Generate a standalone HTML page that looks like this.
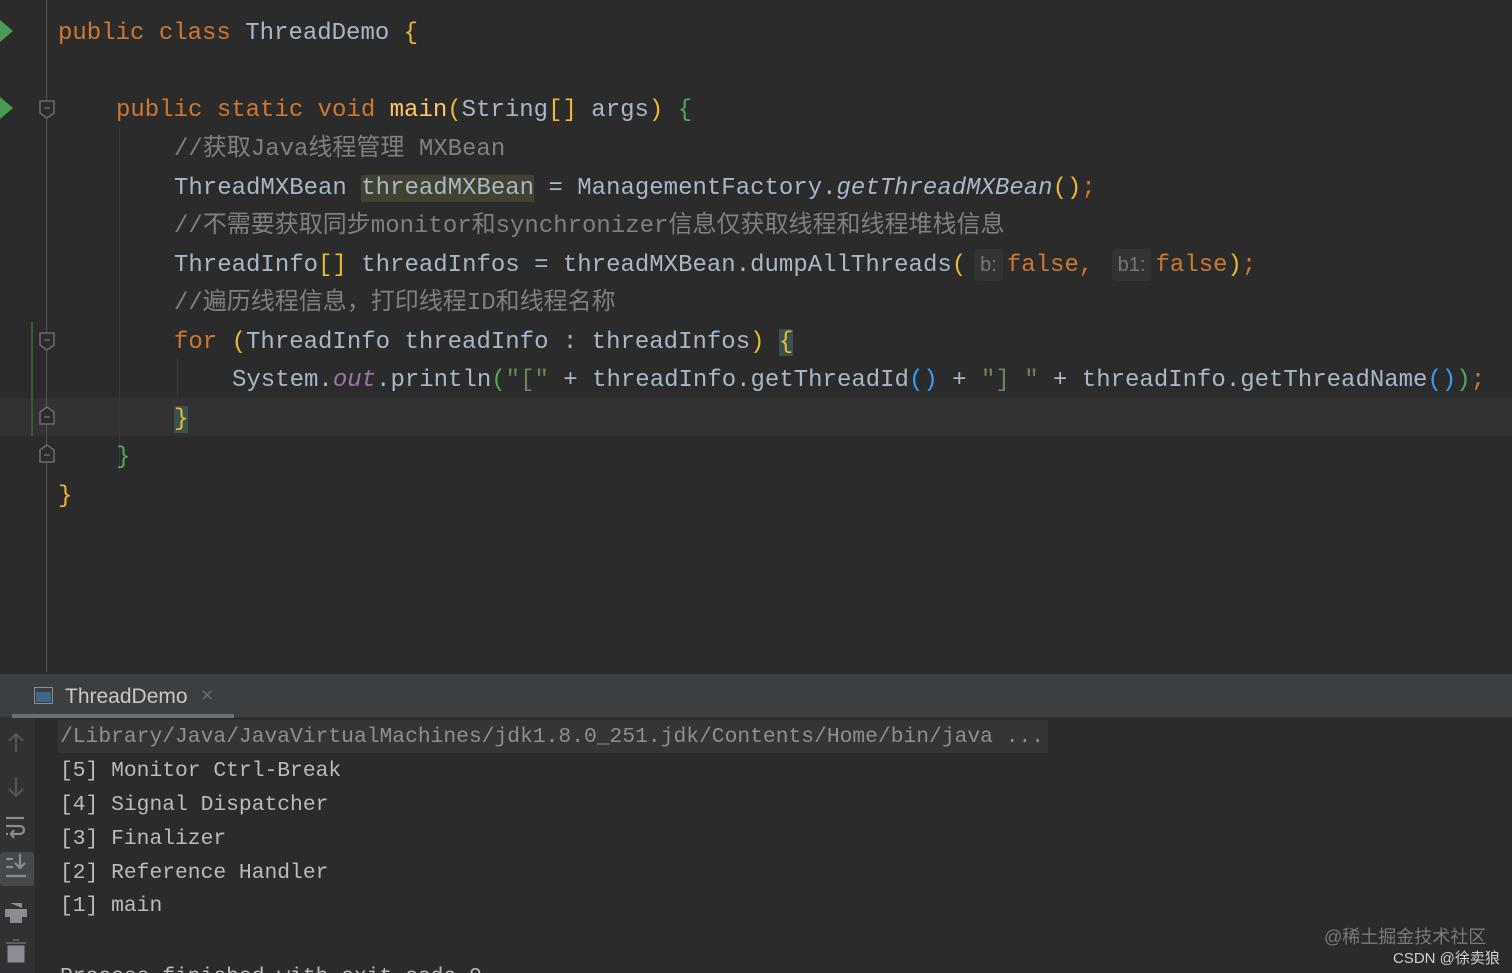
<!DOCTYPE html>
<html style="overflow:hidden"><head><meta charset="utf-8"><style>
html,body{margin:0;width:1512px;height:973px;overflow:hidden}
body{background:#2b2b2b;position:relative;font-family:"Liberation Mono","Noto Sans CJK SC",monospace;}
.l{position:absolute;left:0;font-size:24px;height:38px;line-height:38px;white-space:pre;color:#a9b7c6;letter-spacing:0}
.k{color:#cc7832}.m{color:#ffc66d}.c{color:#808080}.y{color:#e8ba36}.g{color:#54a857}.b{color:#359ff4}.s{color:#6a8759}.i{font-style:italic}.f{color:#9876aa}
.h{display:inline-block;background:#333;color:#787878;font-size:20px;line-height:32px;padding:0 6px;border-radius:4px;font-family:"Liberation Sans",sans-serif;margin:0 4px 0 8px}
.cl{position:absolute;left:60px;font-size:21.3px;height:34px;line-height:34px;white-space:pre;color:#bbbbbb}
</style></head><body>
<div style="position:absolute;left:0;top:398px;width:1512px;height:38px;background:#323232"></div>
<div style="position:absolute;left:46px;top:0;width:1px;height:672px;background:#555"></div>
<div style="position:absolute;left:119px;top:128px;width:1px;height:345px;background:#393939"></div>
<div style="position:absolute;left:177px;top:358px;width:1px;height:38px;background:#393939"></div>
<div style="position:absolute;left:31px;top:322px;width:2px;height:114px;background:#3d5a3d"></div>
<svg style="position:absolute;left:0;top:0" width="60" height="480">
<polygon points="0,20 13,31 0,42" fill="#499c54"/><polygon points="0,97 13,108 0,119" fill="#499c54"/>
<g fill="#2b2b2b" stroke="#777" stroke-width="1.3">
<path d="M40,101h14v12l-7,5l-7,-5z"/><path d="M40,333h14v12l-7,5l-7,-5z"/>
<path d="M40,424h14v-12l-7,-5l-7,5z"/><path d="M40,462h14v-12l-7,-5l-7,5z"/></g>
<g stroke="#777" stroke-width="1.3"><path d="M44,108h6M44,340h6M44,417h6M44,455h6"/></g>
</svg>
<div class="l" style="top:15px;left:58px"><span class="k">public class </span>ThreadDemo <span class="y">{</span></div>
<div class="l" style="top:92px;left:116px"><span class="k">public static void </span><span class="m">main</span><span class="y">(</span>String<span class="y">[]</span> args<span class="y">)</span> <span class="g">{</span></div>
<div class="l c" style="top:131px;left:174px">//获取Java线程管理 MXBean</div>
<div class="l" style="top:170px;left:174px">ThreadMXBean <span style="background:#414232">threadMXBean</span> = ManagementFactory.<span class="i">getThreadMXBean</span><span class="y">()</span><span class="k">;</span></div>
<div class="l c" style="top:208px;left:174px">//不需要获取同步monitor和synchronizer信息仅获取线程和线程堆栈信息</div>
<div class="l" style="top:247px;left:174px">ThreadInfo<span class="y">[]</span> threadInfos = threadMXBean.dumpAllThreads<span class="y">(</span><span class="h">b:</span><span class="k">false, </span><span class="h" style="margin-left:4px">b1:</span><span class="k">false</span><span class="y">)</span><span class="k">;</span></div>
<div class="l c" style="top:285px;left:174px">//遍历线程信息，打印线程ID和线程名称</div>
<div class="l" style="top:324px;left:174px"><span class="k">for </span><span class="y">(</span>ThreadInfo threadInfo : threadInfos<span class="y">)</span> <span class="y" style="background:#3b514d">{</span></div>
<div class="l" style="top:362px;left:232px">System.<span class="f i">out</span>.println<span class="g">(</span><span class="s">"["</span> + threadInfo.getThreadId<span class="b">()</span> + <span class="s">"] "</span> + threadInfo.getThreadName<span class="b">()</span><span class="g">)</span><span class="k">;</span></div>
<div class="l" style="top:401px;left:174px"><span class="y" style="background:#3b514d">}</span></div>
<div class="l" style="top:439px;left:116px"><span class="g">}</span></div>
<div class="l" style="top:478px;left:58px"><span class="y">}</span></div>

<div style="position:absolute;left:0;top:674px;width:1512px;height:44px;background:#3c3f41"></div>
<div style="position:absolute;left:0;top:717px;width:1512px;height:1px;background:#323232"></div>
<div style="position:absolute;left:12px;top:714px;width:222px;height:4px;background:#6d7073"></div>
<svg style="position:absolute;left:33px;top:686px" width="22" height="20"><rect x="1.5" y="1.5" width="18" height="16" fill="#3c3f41" stroke="#8a8f94"/><rect x="3" y="6" width="15" height="10" fill="#3d6a8a"/></svg>
<div style="position:absolute;left:65px;top:685px;font:21px 'Liberation Sans',sans-serif;color:#c8c8c8">ThreadDemo</div>
<div style="position:absolute;left:201px;top:684px;font:21px 'Liberation Sans',sans-serif;color:#6a6d70">×</div>
<div style="position:absolute;left:0;top:718px;width:35px;height:255px;background:#2f3133"></div>
<div style="position:absolute;left:0;top:852px;width:34px;height:34px;background:#45494c;border-radius:3px"></div>
<svg style="position:absolute;left:0;top:718px" width="35" height="255" fill="none" stroke="#8a8e92" stroke-width="2.2">
<path d="M16,34V16M9,23l7,-7l7,7" stroke="#555"/><path d="M16,60V78M9,71l7,7l7,-7" stroke="#555"/>
<path d="M6,100h18M6,108h14a4,4 0 0 1 0,8h-8M14,112l-3,4l3,4M6,116h2"/>
<path d="M6,141h7M6,149h7M6,158h20M20,136v13M15,145l5,5l5,-5"/>
<path d="M10,185h12v5M5,191h22v8H5zM10,199h12v6H10z" fill="#8a8e92" stroke="none"/>
<path d="M6,225h20M13,222h6M8,228h16v16H8z" fill="#8a8e92" stroke="#8a8e92" stroke-width="1"/>
</svg>
<div style="position:absolute;left:58px;top:720px;width:990px;height:33px;background:#333536"></div>
<div class="cl" style="top:720px;color:#8f8f8f">/Library/Java/JavaVirtualMachines/jdk1.8.0_251.jdk/Contents/Home/bin/java ...</div>
<div class="cl" style="top:754px">[5] Monitor Ctrl-Break</div>
<div class="cl" style="top:788px">[4] Signal Dispatcher</div>
<div class="cl" style="top:822px">[3] Finalizer</div>
<div class="cl" style="top:856px">[2] Reference Handler</div>
<div class="cl" style="top:889px">[1] main</div>
<div class="cl" style="top:960px">Process finished with exit code 0</div>
<div style="position:absolute;left:1324px;top:923px;font:18px 'Liberation Sans','Noto Sans CJK SC',sans-serif;color:#7a7a7a">@稀土掘金技术社区</div>
<div style="position:absolute;left:1393px;top:947px;font:15px 'Liberation Sans','Noto Sans CJK SC',sans-serif;color:#d0d0d0">CSDN @徐卖狼</div>
</body></html>
